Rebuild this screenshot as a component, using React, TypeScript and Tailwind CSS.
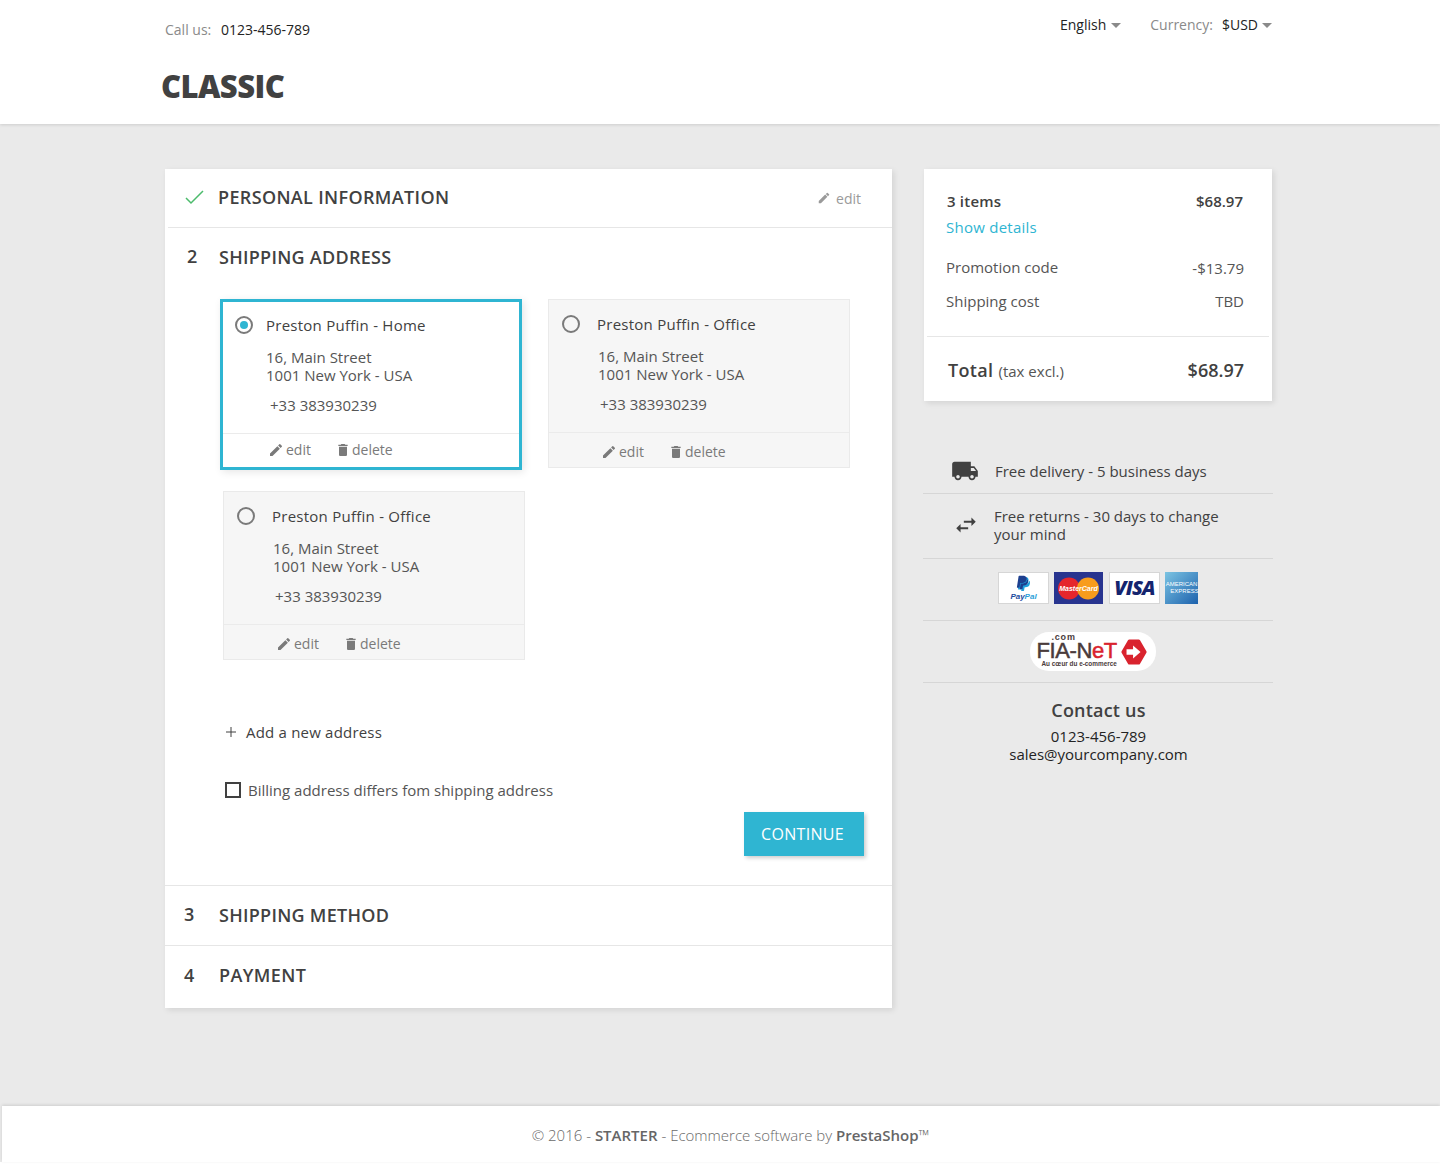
import { FaPaypal } from "react-icons/fa";
import { MdDelete, MdEdit, MdLocalShipping, MdSwapHoriz } from "react-icons/md";

const font = { fontFamily: '"Open Sans", "Noto Sans", sans-serif' };
const logoFont = { fontFamily: '"Liberation Sans", sans-serif' };

function AddressCard({
  name,
  selected,
  className,
}: {
  name: string;
  selected?: boolean;
  className?: string;
}) {
  return (
    <div
      className={`w-[302px] ${
        selected
          ? "h-[171px] border-[3px] border-[#2fb5d2] bg-white shadow-[2px_2px_8px_0_rgba(0,0,0,0.1)]"
          : "h-[169px] border border-[#eaeaea] bg-[#f6f6f6]"
      } ${className ?? ""}`}
    >
      <div className={`flex items-center ${selected ? "pl-[12px] pt-[14px]" : "pl-[13px] pt-[15px]"}`}>
        <span className="flex h-[18px] w-[18px] items-center justify-center rounded-full border-2 border-[#7a7a7a]">
          {selected && <span className="h-[8px] w-[8px] rounded-full bg-[#2fb5d2]" />}
        </span>
        <span className={`${selected ? "ml-[13px]" : "ml-[17px]"} text-[15px] leading-[18px] tracking-[0.25px] text-[#414141]`}>
          {name}
        </span>
      </div>
      <div className={`${selected ? "ml-[43px]" : "ml-[49px]"} mt-[14px] text-[15px] leading-[18px] text-[#555555]`}>
        <div>16, Main Street</div>
        <div>1001 New York - USA</div>
        <div className={`${selected ? "ml-[4px]" : "ml-[2px]"} mt-[12px]`}>+33 383930239</div>
      </div>
      {selected ? (
        <div className="mt-[19px] flex h-[34px] items-center border-t border-[#ebebeb] pb-[2px] pl-[45px] text-[14px] text-[#7a7a7a]">
          <MdEdit className="h-[16px] w-[16px]" />
          <span className="ml-[2px]">edit</span>
          <MdDelete className="ml-[24px] h-[16px] w-[16px]" />
          <span className="ml-[1px]">delete</span>
        </div>
      ) : (
        <div className="mt-[19px] flex h-[35px] items-center border-t border-[#ebebeb] pl-[52px] pt-[3px] text-[14px] text-[#7a7a7a]">
          <MdEdit className="h-[16px] w-[16px]" />
          <span className="ml-[2px]">edit</span>
          <MdDelete className="ml-[24px] h-[16px] w-[16px]" />
          <span className="ml-[1px]">delete</span>
        </div>
      )}
    </div>
  );
}

function PaymentLogos() {
  return (
    <div className="flex h-[62px] items-center justify-center border-b border-[#d6d6d6] pb-[4px]">
      <div className="flex h-[32px] w-[51px] flex-col items-center justify-center border border-[#d6d6d6] bg-white">
        <span className="relative h-[17px] w-[17px]">
          <FaPaypal className="absolute left-[2px] top-[1px] h-[16px] w-[14px] text-[#1f9fdc]" />
          <FaPaypal className="absolute left-[1px] top-0 h-[15px] w-[13px] text-[#1d3f8f]" />
        </span>
        <span className="text-[8px] leading-[9px] font-bold italic text-[#1d4c9e]" style={logoFont}>
          Pay<span className="text-[#2c9fd9]">Pal</span>
        </span>
      </div>
      <div className="ml-[5px] h-[32px] w-[49px] overflow-hidden bg-[#28348f]">
        <svg viewBox="0 0 49 32" className="h-[32px] w-[49px]">
          <circle cx="15" cy="16.5" r="11" fill="#e5262c" />
          <circle cx="34" cy="16.5" r="11" fill="#f89c1c" />
          <text x="24.5" y="19" textAnchor="middle" fontSize="7" fontStyle="italic" fontWeight="700" fill="#fff" fontFamily="Liberation Sans">
            MasterCard
          </text>
        </svg>
      </div>
      <div className="ml-[6px] flex h-[32px] w-[51px] items-center justify-center border border-[#d6d6d6] bg-white text-[20px] font-extrabold italic tracking-[-0.8px] text-[#14246e]">
        VISA
      </div>
      <div
        className="ml-[5px] flex h-[32px] w-[33px] flex-col items-center justify-center bg-gradient-to-br from-[#7cc4e2] to-[#1d62ad] text-[6px] leading-[7px] text-white"
        style={logoFont}
      >
        <span>AMERICAN</span>
        <span className="pl-[6px]">EXPRESS</span>
      </div>
    </div>
  );
}

function FiaNetLogo() {
  return (
    <div className="flex h-[62px] items-center justify-center border-b border-[#d6d6d6] pr-[11px]">
      <div className="relative h-[39px] w-[126px] rounded-[19px] bg-white" style={logoFont}>
        <span className="absolute left-[22px] top-[2px] text-[9px] leading-[6px] font-bold tracking-[0.8px] text-[#4a3b3b]">.com</span>
        <span className="absolute left-[7px] top-[8px] text-[22px] leading-[22px] tracking-[-0.4px] whitespace-nowrap text-[#4a3b3b] [-webkit-text-stroke:0.5px]">
          FIA-N<span className="text-[#d9232e]">eT</span>
        </span>
        <span className="absolute left-[12px] top-[28px] text-[6.4px] leading-[8px] font-bold whitespace-nowrap text-[#4a3b3b]">
          Au cœur du e-commerce
        </span>
        <svg viewBox="0 0 30 30" className="absolute left-[90px] top-[6px] h-[28px] w-[28px]">
          <path d="M10 3h10l7 12-7 12H10L3 15z" fill="#d9232e" stroke="#d9232e" strokeWidth="3" strokeLinejoin="round" />
          <path d="M14 8l8 7-8 7v-4H7v-6h7z" fill="#fff" />
        </svg>
      </div>
    </div>
  );
}

export default function App() {
  return (
    <div className="flex min-h-[1166px] flex-col bg-white" style={font}>
      <header className="relative z-10 h-[124px] bg-white shadow-[0_1px_3px_0_rgba(0,0,0,0.12)]">
        <div className="ml-[165px] flex w-[1107px] items-start justify-between">
          <div className="pt-[21px] text-[14px] leading-[18px] text-[#8a8a8a]">
            Call us: <span className="ml-[6px] text-[14px] text-[#232323]">0123-456-789</span>
          </div>
          <div className="flex items-center pt-[16px] text-[14px] leading-[18px]">
            <span className="text-[#232323]">English</span>
            <span className="ml-[5px] h-0 w-0 border-x-[5px] border-t-[5px] border-x-transparent border-t-[#8a8a8a]" />
            <span className="ml-[29px] text-[#8a8a8a]">Currency:</span>
            <span className="ml-[9px] text-[#232323]">$USD</span>
            <span className="ml-[4px] h-0 w-0 border-x-[5px] border-t-[5px] border-x-transparent border-t-[#8a8a8a]" />
          </div>
        </div>
        <div className="ml-[161px] mt-[26px] text-[31px] leading-[42px] font-extrabold tracking-[-0.6px] text-[#414141]">CLASSIC</div>
      </header>

      <main className="flex h-[982px] items-start gap-[32px] bg-[#eaeaea] pl-[165px] pt-[45px]">
        <section className="h-[839px] w-[727px] bg-white text-[#414141] shadow-[2px_2px_6px_0_rgba(0,0,0,0.1)]">
          <div className="ml-[3px] flex h-[59px] items-center border-b border-[#e6e6e6] pb-[2px]">
            <svg viewBox="0 0 24 24" className="ml-[14px] h-[24px] w-[24px] fill-none stroke-[#4cbb6c] stroke-[1.5]">
              <path d="M4 13l5 5L21 6" />
            </svg>
            <h2 className="ml-[12px] text-[18px] leading-[24px] font-semibold tracking-[0.35px]">PERSONAL INFORMATION</h2>
            <div className="ml-auto flex items-center pr-[31px] pt-[2px] text-[14px] text-[#9a9a9a]">
              <MdEdit className="mr-[5px] h-[14px] w-[14px]" />
              edit
            </div>
          </div>

          <div className="h-[658px] border-b border-[#e6e6e6]">
            <div className="flex h-[60px] items-center pb-[3px] pl-[22px]">
              <span className="w-[32px] text-[18px] font-semibold">2</span>
              <h2 className="text-[18px] leading-[24px] font-semibold tracking-[0.27px]">SHIPPING ADDRESS</h2>
            </div>
            <div className="ml-[55px] mt-[11px] flex items-start">
              <AddressCard name="Preston Puffin - Home" selected />
              <AddressCard name="Preston Puffin - Office" className="ml-[26px]" />
            </div>
            <AddressCard name="Preston Puffin - Office" className="ml-[58px] mt-[21px]" />
            <div className="ml-[58px] mt-[60px] flex items-center text-[15px] leading-[24px] tracking-[0.2px]">
              <span className="flex h-[16px] w-[16px] items-center justify-center">
                <svg viewBox="0 0 10 10" className="h-[10px] w-[10px] fill-none stroke-[#414141] stroke-1">
                  <path d="M5 0v10M0 5h10" />
                </svg>
              </span>
              <span className="ml-[7px]">Add a new address</span>
            </div>
            <div className="ml-[60px] mt-[34px] flex items-center text-[15px] leading-[24px] text-[#555555]">
              <span className="h-[16px] w-[16px] border-2 border-[#414141]" />
              <span className="ml-[7px]">Billing address differs fom shipping address</span>
            </div>
            <div className="mr-[28px] mt-[10px] flex justify-end">
              <button className="h-[44px] w-[120px] bg-[#2fb5d2] pr-[3px] text-[16px] tracking-[0.3px] text-white shadow-[2px_2px_4px_0_rgba(0,0,0,0.2)]">
                CONTINUE
              </button>
            </div>
          </div>

          <div className="flex h-[60px] items-center border-b border-[#e6e6e6] pb-[2px] pl-[19px]">
            <span className="w-[35px] text-[18px] font-semibold">3</span>
            <h2 className="text-[18px] leading-[24px] font-semibold tracking-[0.27px]">SHIPPING METHOD</h2>
          </div>
          <div className="flex h-[60px] items-center pb-[2px] pl-[19px]">
            <span className="w-[35px] text-[18px] font-semibold">4</span>
            <h2 className="text-[18px] leading-[24px] font-semibold tracking-[0.4px]">PAYMENT</h2>
          </div>
        </section>

        <aside className="w-[349px] text-[#414141]">
          <div className="h-[232px] w-[348px] bg-white pl-[22px] pr-[28px] text-[15px] shadow-[2px_2px_6px_0_rgba(0,0,0,0.1)]">
            <div className="flex justify-between pt-[22px] leading-[20px] font-semibold">
              <span className="pl-[1px] tracking-[0.2px]">3 items</span>
              <span className="pr-[1px]">$68.97</span>
            </div>
            <div className="mt-[6px] leading-[20px] tracking-[0.25px] text-[#2fb5d2]">Show details</div>
            <div className="mt-[20px] flex justify-between leading-[20px] text-[#555555]">
              <span>Promotion code</span>
              <span className="pt-[1px]">-$13.79</span>
            </div>
            <div className="mt-[13px] flex justify-between leading-[20px] text-[#555555]">
              <span>Shipping cost</span>
              <span>TBD</span>
            </div>
          </div>
          <div className="relative -mt-[65px] ml-[3px] flex h-[65px] w-[342px] items-center justify-between border-t border-[#e6e6e6] pl-[21px] pr-[25px] pt-[2px]">
            <span className="text-[18px] font-semibold tracking-[0.35px]">
              Total <span className="text-[15px] font-normal tracking-normal text-[#555555]">(tax excl.)</span>
            </span>
            <span className="text-[18px] font-semibold">$68.97</span>
          </div>

          <div className="-ml-[1px] mt-[41px] w-[350px] text-[15px] leading-[18px]">
            <div className="flex h-[52px] items-center border-b border-[#d6d6d6] pt-[7px]">
              <MdLocalShipping className="ml-[28px] h-[28px] w-[28px] text-[#414141]" />
              <span className="ml-[16px]">Free delivery - 5 business days</span>
            </div>
            <div className="flex h-[65px] items-center border-b border-[#d6d6d6] pb-[2px]">
              <MdSwapHoriz className="ml-[30px] h-[26px] w-[26px] text-[#414141]" />
              <span className="ml-[15px] w-[240px]">Free returns - 30 days to change your mind</span>
            </div>
            <PaymentLogos />
            <FiaNetLogo />
          </div>
          <div className="pt-[15px] text-center text-[15px] leading-[18px]">
            <div className="mb-[5px] text-[18px] leading-[24px] font-semibold tracking-[0.2px]">Contact us</div>
            <div className="text-[#232323]">0123-456-789</div>
            <div className="text-[#232323]">sales@yourcompany.com</div>
          </div>
        </aside>
      </main>

      <div className="bg-[#eaeaea]">
        <footer className="ml-[2px] flex h-[56px] items-center justify-center bg-white pl-[19px] pt-[2px] text-[15px] font-light text-[#6a6a6a] shadow-[0_-1px_3px_0_rgba(0,0,0,0.12)]">
          <span>
            © 2016 - <span className="font-semibold text-[#666666]">STARTER</span> - Ecommerce software by{" "}
            <span className="font-semibold text-[#666666]">PrestaShop</span>™
          </span>
        </footer>
      </div>
    </div>
  );
}
